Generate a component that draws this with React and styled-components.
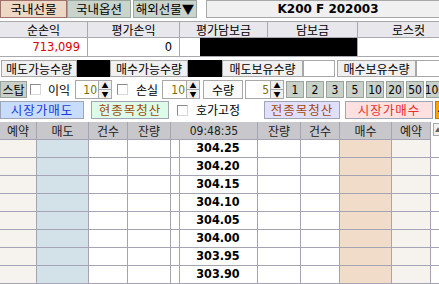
import styled, { createGlobalStyle } from 'styled-components';

const GlobalStyle = createGlobalStyle`
    html, body {
        margin: 0;
        padding: 0;
        background: #ffffff;
    }
    body {
        font-family: "Noto Sans CJK KR", "DejaVu Sans", sans-serif;
        font-size: 12px;
        color: #000;
    }
`;

const Screen = styled.div`
    width: 460px;
    height: 284px;
    overflow: hidden;
    display: flex;
    flex-direction: column;
`;

const TopBar = styled.div`
    display: flex;
    height: 20px;
    align-items: stretch;
`;

const Tab = styled.div`
    box-sizing: border-box;
    width: ${(p) => p.$w}px;
    margin-right: ${(p) => p.$mr || 0}px;
    display: flex;
    align-items: center;
    justify-content: center;
    background: ${(p) => (p.$active ? '#ecd8c4' : '#c8d4cc')};
    border: 1px solid ${(p) => (p.$active ? '#a0706a' : '#9aa6a0')};
    font-size: 12.5px;
    line-height: 1;
`;

const TitlePanel = styled.div`
    box-sizing: border-box;
    flex: 1;
    display: flex;
    align-items: center;
    justify-content: center;
    padding-right: 10px;
    background: #f0f0f0;
    border: 1px solid #a8a8a8;
    font-family: "DejaVu Sans", sans-serif;
    font-weight: bold;
    font-size: 12px;
`;

const Summary = styled.div`
    margin-top: 3px;
    display: grid;
    grid-template-columns: 88px 92px 88px 90px 1fr;
    border-top: 1px solid #a8a8a8;
`;

const SumHead = styled.div`
    box-sizing: border-box;
    height: 16px;
    display: flex;
    align-items: center;
    justify-content: center;
    background: #e8e8ec;
    border-right: 1px solid #a8a8b0;
    border-bottom: 1px solid #a8a8b0;
    font-size: 12px;
    line-height: 1;
`;

const SumValue = styled.div`
    box-sizing: border-box;
    height: 19px;
    display: flex;
    align-items: center;
    justify-content: flex-end;
    padding-right: 7px;
    background: #fff;
    border-right: 1px solid #a8a8b0;
    border-bottom: 1px solid #a8a8b0;
    color: ${(p) => p.$color || '#000'};
    font-family: "DejaVu Sans", sans-serif;
    font-size: 11.5px;
    line-height: 1;
`;

const Masked = styled.div`
    grid-column: span 2;
    height: 19px;
    display: flex;
    border-bottom: 1px solid #a8a8b0;
    box-sizing: border-box;
    background: #fff;
`;

const MaskBlack = styled.div`
    margin-left: 20px;
    flex: 1;
    background: #000;
    border-right: 1px solid #a8a8b0;
`;

const HoldRow = styled.div`
    margin-top: 3px;
    height: 18px;
    display: flex;
    align-items: stretch;
`;

const FieldLabel = styled.div`
    box-sizing: border-box;
    width: ${(p) => p.$w}px;
    margin-left: ${(p) => p.$ml || 0}px;
    display: flex;
    align-items: center;
    justify-content: center;
    background: #f0f0f0;
    border: 1px solid #a8a8a8;
    font-size: 12px;
    line-height: 1;
`;

const FieldValue = styled.div`
    box-sizing: border-box;
    width: ${(p) => p.$w}px;
    background: ${(p) => (p.$masked ? '#000' : '#fff')};
    border: 1px solid ${(p) => (p.$masked ? '#000' : '#a8a8a8')};
`;

const OrderRow = styled.div`
    margin-top: 3px;
    height: 19px;
    display: flex;
    align-items: center;
`;

const GreyButton = styled.div`
    box-sizing: border-box;
    width: ${(p) => p.$w}px;
    height: 17px;
    margin-right: ${(p) => p.$mr ?? 2}px;
    display: flex;
    align-items: center;
    justify-content: center;
    background: #c8d0ca;
    border: 1px solid #9aa29c;
    font-size: 12px;
    font-family: ${(p) => (p.$num ? '"DejaVu Sans Condensed", "DejaVu Sans", sans-serif' : 'inherit')};
    line-height: 1;
`;

const Check = styled.span`
    box-sizing: border-box;
    width: 11px;
    height: 11px;
    margin: 0 ${(p) => p.$mr}px 0 ${(p) => p.$ml}px;
    background: #fff;
    border: 1px solid #8a8a8a;
    border-right-color: #d8d8d8;
    border-bottom-color: #d8d8d8;
`;

const Caption = styled.span`
    width: ${(p) => p.$w}px;
    font-size: 12px;
    line-height: 1;
`;

const Spin = styled.div`
    display: flex;
    height: 19px;
    margin-right: ${(p) => p.$mr || 0}px;
`;

const SpinInput = styled.div`
    box-sizing: border-box;
    width: ${(p) => p.$w}px;
    display: flex;
    align-items: center;
    justify-content: flex-end;
    padding-right: 1px;
    background: #fff;
    border: 1px solid #a8a8a8;
    color: #807000;
    font-family: "DejaVu Sans Condensed", "DejaVu Sans", sans-serif;
    font-size: 12px;
    line-height: 1;
`;

const SpinArrows = styled.div`
    box-sizing: border-box;
    width: 13px;
    display: flex;
    flex-direction: column;
    border: 1px solid #a8a8a8;
    border-left: none;
    background: #f0f0f0;
`;

const Arrow = styled.div`
    flex: 1;
    display: flex;
    align-items: center;
    justify-content: center;
    font-size: 7px;
    line-height: 1;
    & + & {
        border-top: 1px solid #a8a8a8;
    }
`;

const QtyLabel = styled.div`
    box-sizing: border-box;
    width: 40px;
    height: 19px;
    display: flex;
    align-items: center;
    justify-content: center;
    background: #fafafa;
    border: 1px solid #a8a8a8;
    margin-right: 2px;
    font-size: 12px;
    line-height: 1;
`;

const ActionRow = styled.div`
    margin-top: 2px;
    height: 19px;
    display: flex;
    align-items: center;
`;

const ActionButton = styled.div`
    box-sizing: border-box;
    width: ${(p) => p.$w}px;
    height: 18px;
    margin-left: ${(p) => p.$ml || 0}px;
    display: flex;
    align-items: center;
    justify-content: center;
    letter-spacing: 1px;
    background: ${(p) => p.$bg};
    color: ${(p) => p.$fg};
    border: 1px solid #a0a4b4;
    font-size: 12.5px;
    line-height: 1;
`;

const NavButton = styled.div`
    box-sizing: border-box;
    width: 12px;
    height: 18px;
    margin-left: 2px;
    display: flex;
    align-items: center;
    justify-content: center;
    background: #ffa400;
    border: 1px solid #c07800;
    font-size: 8px;
`;

const Ladder = styled.div`
    margin-top: 3px;
    display: grid;
    grid-template-columns: 37px 52px 39px 43px 9px 78px 43px 39px 52px 39px 1fr;
    grid-auto-rows: 18px;
`;

const Head = styled.div`
    box-sizing: border-box;
    grid-column: span ${(p) => p.$span || 1};
    display: flex;
    align-items: center;
    justify-content: center;
    background: #c8c8cc;
    border-right: 1px solid #a4a4b4;
    border-bottom: 1px solid #a4a4b4;
    color: #202020;
    font-size: 12px;
    font-family: ${(p) => (p.$num ? '"DejaVu Sans Condensed", "DejaVu Sans", sans-serif' : 'inherit')};
    line-height: 1;
`;

const ScrollHead = styled.div`
    display: flex;
    align-items: flex-start;
    padding: 1px 0 0 2px;
    background: #fff;
`;

const ScrollArrow = styled.div`
    box-sizing: border-box;
    width: 10px;
    height: 13px;
    display: flex;
    align-items: center;
    justify-content: center;
    background: #f0f0f0;
    border: 1px solid #a8a8a8;
    font-size: 6px;
    color: #606060;
`;

const Cell = styled.div`
    box-sizing: border-box;
    display: flex;
    align-items: center;
    justify-content: center;
    background: ${(p) => p.$bg || '#fff'};
    border-right: ${(p) => (p.$last ? 'none' : '1px solid #a4a4b4')};
    border-bottom: 1px solid #a4a4b4;
`;

const Price = styled(Cell)`
    font-family: "DejaVu Sans Condensed", "DejaVu Sans", sans-serif;
    font-weight: bold;
    font-size: 12.5px;
    line-height: 1;
    padding-right: 1px;
`;

const prices = ['304.25', '304.20', '304.15', '304.10', '304.05', '304.00', '303.95', '303.90'];
const steps = ['1', '2', '3', '5', '10', '20', '50', '100'];

function SpinBox({ value, w, mr }) {
    return (
        <Spin $mr={mr}>
            <SpinInput $w={w}>{value}</SpinInput>
            <SpinArrows>
                <Arrow>▲</Arrow>
                <Arrow>▼</Arrow>
            </SpinArrows>
        </Spin>
    );
}

export default function App() {
    return (
        <Screen>
            <GlobalStyle />
            <TopBar>
                <Tab $w={67} $active>국내선물</Tab>
                <Tab $w={64} $mr={2}>국내옵션</Tab>
                <Tab $w={64} $mr={9}>해외선물▼</Tab>
                <TitlePanel>K200 F 202003</TitlePanel>
            </TopBar>

            <Summary>
                <SumHead>순손익</SumHead>
                <SumHead>평가손익</SumHead>
                <SumHead>평가담보금</SumHead>
                <SumHead>담보금</SumHead>
                <SumHead>로스컷</SumHead>
                <SumValue $color="#e00000">713,099</SumValue>
                <SumValue>0</SumValue>
                <Masked>
                    <MaskBlack />
                </Masked>
                <SumValue>I</SumValue>
            </Summary>

            <HoldRow>
                <FieldLabel $w={76} $ml={1}>매도가능수량</FieldLabel>
                <FieldValue $w={33} $masked />
                <FieldLabel $w={78}>매수가능수량</FieldLabel>
                <FieldValue $w={34} $masked />
                <FieldLabel $w={81}>매도보유수량</FieldLabel>
                <FieldValue $w={32} />
                <FieldLabel $w={79} $ml={2}>매수보유수량</FieldLabel>
                <FieldValue $w={40} />
            </HoldRow>

            <OrderRow>
                <GreyButton $w={27}>스탑</GreyButton>
                <Check $ml={1} $mr={7} />
                <Caption $w={27}>이익</Caption>
                <SpinBox value="10" w={24} mr={5} />
                <Check $ml={0} $mr={8} />
                <Caption $w={26}>손실</Caption>
                <SpinBox value="10" w={25} mr={3} />
                <QtyLabel>수량</QtyLabel>
                <SpinBox value="5" w={26} mr={2} />
                {steps.map((s) => (
                    <GreyButton key={s} $w={18} $num>
                        {s}
                    </GreyButton>
                ))}
            </OrderRow>

            <ActionRow>
                <ActionButton $w={84} $bg="#c8dcfe" $fg="#1838e0">시장가매도</ActionButton>
                <ActionButton $w={78} $ml={7} $bg="#dcfce8" $fg="#a04808">현종목청산</ActionButton>
                <Check $ml={8} $mr={8} />
                <Caption $w={68}>호가고정</Caption>
                <ActionButton $w={76} $bg="#e0e0fc" $fg="#a04808">전종목청산</ActionButton>
                <ActionButton $w={88} $ml={5} $bg="#ffe0e0" $fg="#e83030">시장가매수</ActionButton>
                <NavButton>◀</NavButton>
            </ActionRow>

            <Ladder>
                <Head>예약</Head>
                <Head>매도</Head>
                <Head>건수</Head>
                <Head>잔량</Head>
                <Head $span={2} $num>09:48:35</Head>
                <Head>잔량</Head>
                <Head>건수</Head>
                <Head>매수</Head>
                <Head>예약</Head>
                <ScrollHead>
                    <ScrollArrow>▲</ScrollArrow>
                </ScrollHead>
                {prices.map((p) => [
                    <Cell key={p + 'a'} $bg="#f6f3ef" />,
                    <Cell key={p + 'b'} $bg="#d2e2e8" />,
                    <Cell key={p + 'c'} />,
                    <Cell key={p + 'd'} />,
                    <Cell key={p + 'e'} />,
                    <Price key={p + 'f'}>{p}</Price>,
                    <Cell key={p + 'g'} />,
                    <Cell key={p + 'h'} />,
                    <Cell key={p + 'i'} $bg="#f0dcc8" />,
                    <Cell key={p + 'j'} $bg="#f6f3ef" />,
                    <Cell key={p + 'k'} $last />,
                ])}
            </Ladder>
        </Screen>
    );
}
